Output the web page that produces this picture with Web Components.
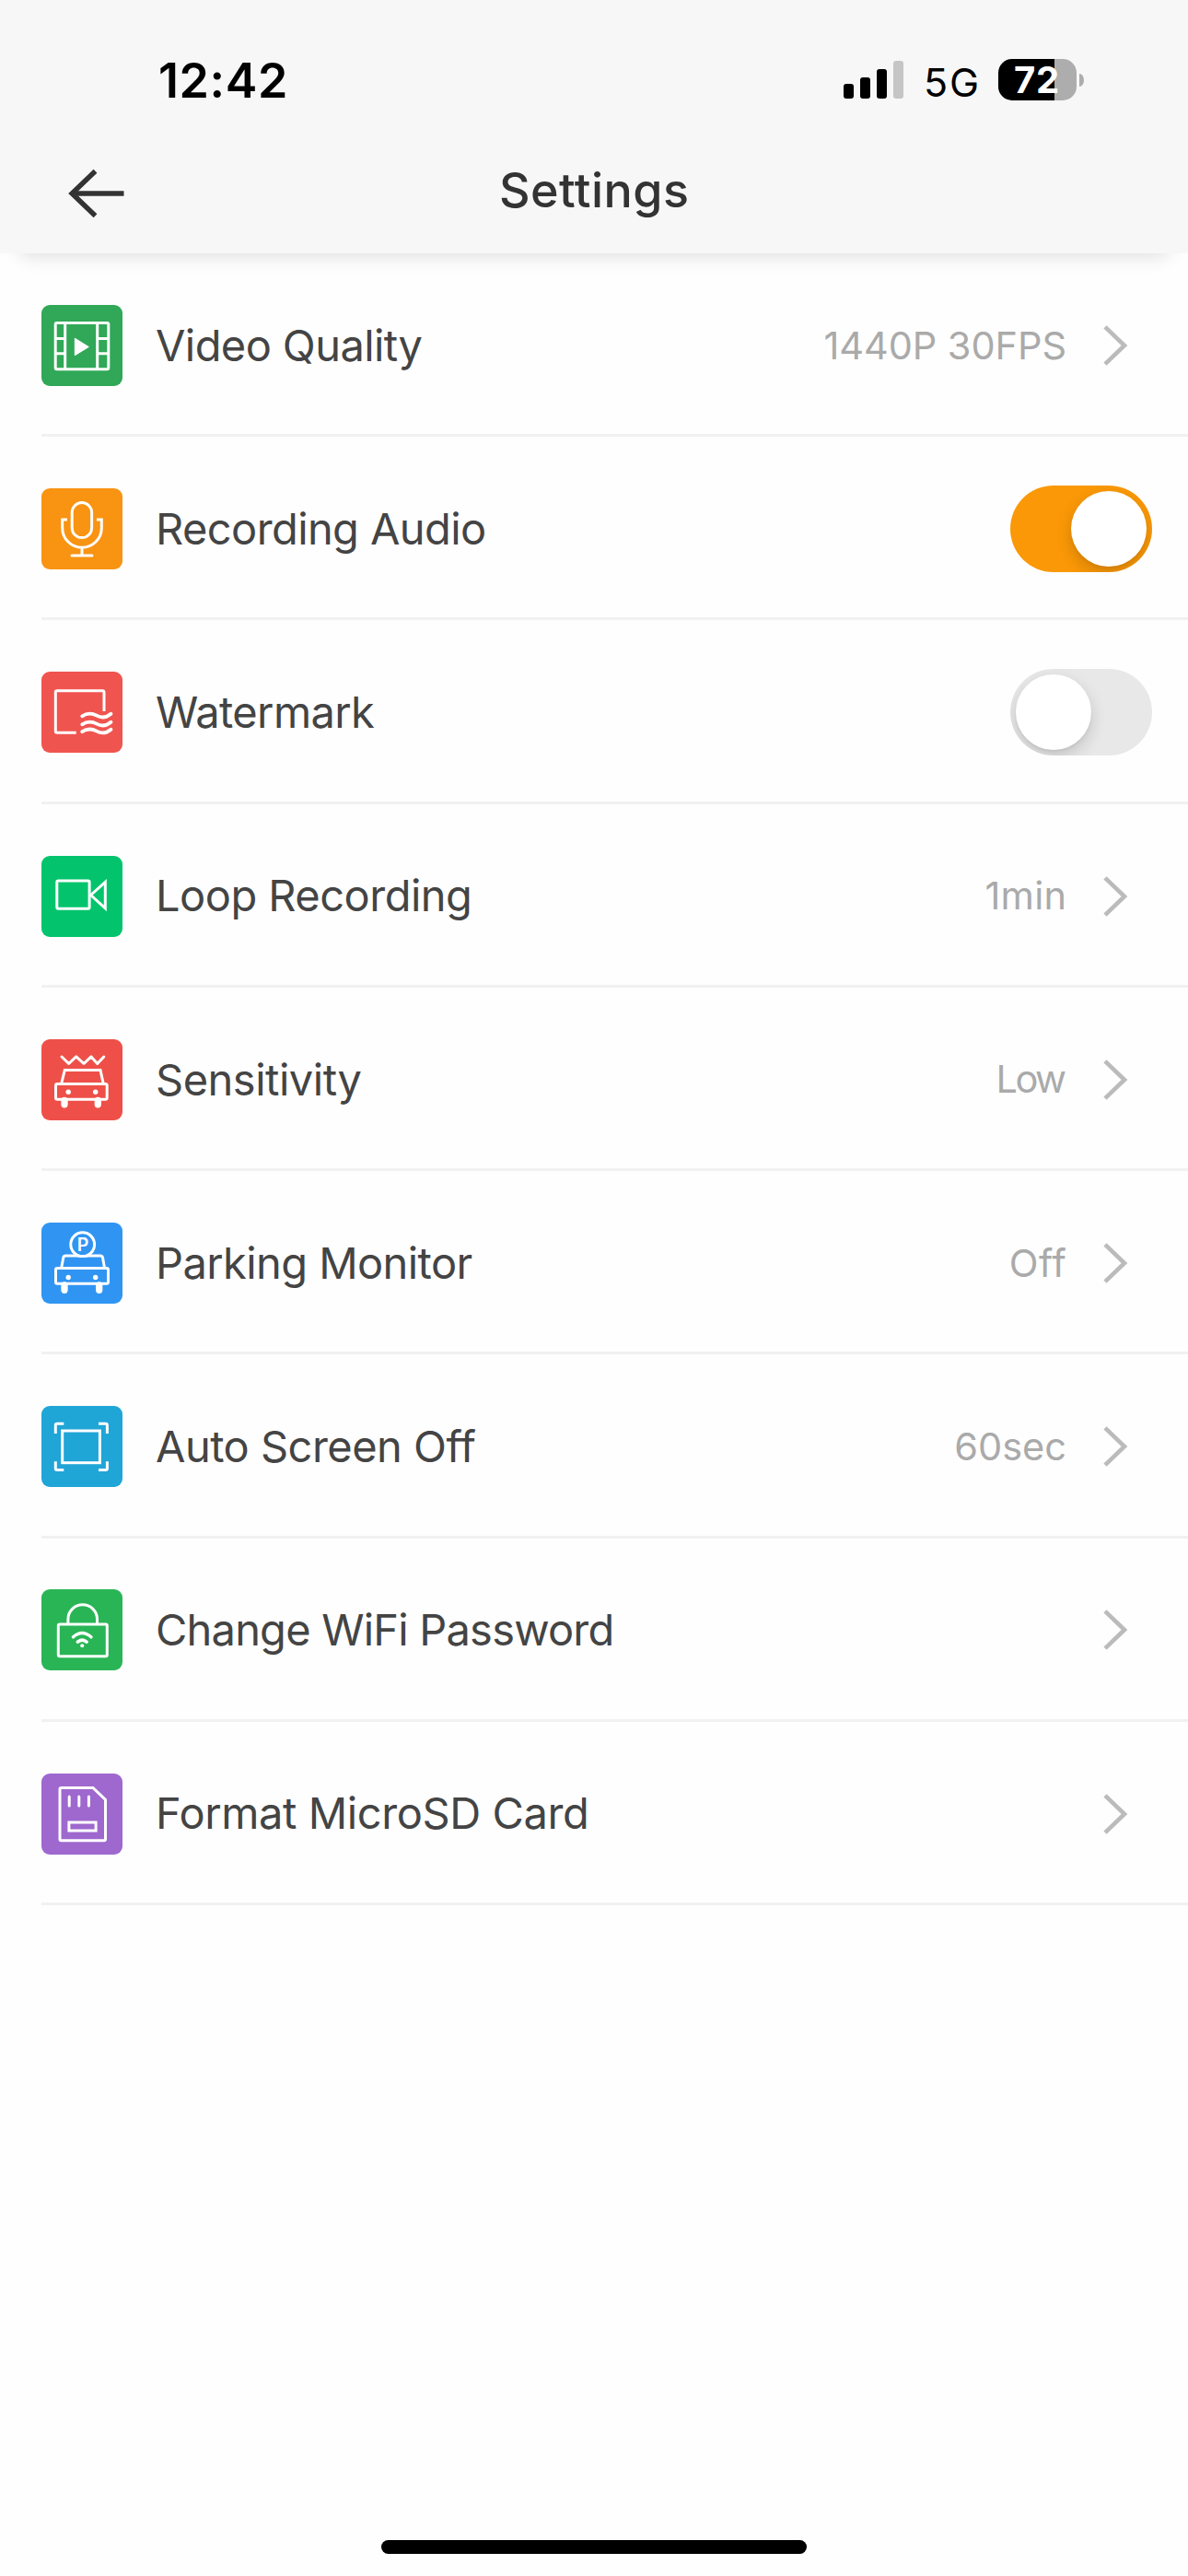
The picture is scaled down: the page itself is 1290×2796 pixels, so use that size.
<!DOCTYPE html>
<html lang="en">
<head>
<meta charset="utf-8">
<title>Settings</title>
<style>
html,body{margin:0;padding:0}
body{width:1290px;height:2796px;overflow:hidden;background:#fefefe;font-family:Inter,"Liberation Sans",sans-serif}
</style>
</head>
<body>
<settings-screen></settings-screen>
<script>
const define = (name, html, setup) => {
  const tpl = document.createElement('template');
  tpl.innerHTML = html;
  customElements.define(name, class extends HTMLElement {
    connectedCallback() {
      if (this.shadowRoot) return;
      this.attachShadow({ mode: 'open' }).append(tpl.content.cloneNode(true));
      if (setup) setup.call(this, this.shadowRoot);
    }
  });
};

// One line of text, tracked so that its ink spans the given number of pixels.
const ctx = document.createElement('canvas').getContext('2d');
define('track-text', `<style>:host{display:block;white-space:nowrap;line-height:1.2}</style><span></span>`, function (root) {
  const text = this.getAttribute('text');
  const size = this.getAttribute('size');
  const weight = this.getAttribute('weight') || 400;
  const span = root.querySelector('span');
  span.textContent = text;
  this.style.fontSize = size + 'px';
  this.style.fontWeight = weight;
  ctx.font = `${weight} ${size}px Inter, "Liberation Sans", sans-serif`;
  const m = ctx.measureText(text);
  const ink = m.actualBoundingBoxRight + m.actualBoundingBoxLeft;
  const spacing = (Number(this.getAttribute('ink')) - ink) / (text.length - 1);
  span.style.letterSpacing = spacing.toFixed(3) + 'px';
  span.style.marginRight = (-spacing).toFixed(3) + 'px';
});

define('battery-level', `
<style>
:host{display:flex;align-items:center;gap:3px}
.cell{width:85px;height:45px;border-radius:15px;background:linear-gradient(90deg,#000 61px,#adadad 61px);color:#fff;display:flex;align-items:center;box-sizing:border-box;padding:1px 0 0 17px}
.tip{width:5px;height:14px;border-radius:0 5px 5px 0/0 7px 7px 0;background:#adadad}
</style>
<div class="cell"><track-text text="72" size="40" weight="700" ink="46"></track-text></div><div class="tip"></div>`);

define('status-bar', `
<style>
:host{display:flex;align-items:center;justify-content:space-between;height:173px;box-sizing:border-box;padding:0 113px 0 172px;color:#000}
.time{padding-top:4px}
.right{display:flex;align-items:center}
.signal{display:flex;align-items:flex-end;gap:7px;height:41px}
.signal i{width:11px;border-radius:3px;background:#000}
.net{padding:6px 21px 0 22px}
</style>
<track-text class="time" text="12:42" size="52" weight="600" ink="136"></track-text>
<div class="right">
  <div class="signal"><i style="height:16px"></i><i style="height:23px"></i><i style="height:32px"></i><i style="height:41px;background:#c5c5c5"></i></div>
  <track-text class="net" text="5G" size="43" ink="55"></track-text>
  <battery-level></battery-level>
</div>`);

define('nav-bar', `
<style>
:host{display:grid;grid-template-columns:1fr auto 1fr;align-items:center;height:102px;box-sizing:border-box;padding:0 72px 30px;color:#333}
svg{display:block;margin-top:2px}
.title{padding-bottom:3px}
</style>
<svg width="66" height="56" viewBox="0 0 66 56" fill="none" stroke="#333" stroke-width="5.500"><path d="M62.500 28H7"/><path d="M31.500 3.800L6.200 28L31.500 52.200"/></svg>
<track-text class="title" text="Settings" size="52" weight="500" ink="202"></track-text><span></span>`);

define('toggle-switch', `
<style>
:host{display:flex;align-items:center;width:154px;height:94px;box-sizing:border-box;border-radius:47px;padding:0 6px;background:#e8e8e8;overflow:hidden}
:host([on]){background:#fa9807;justify-content:flex-end}
i{width:82px;height:82px;border-radius:50%;background:#fff;box-shadow:0 7px 17px rgba(0,0,0,.16),0 2px 3px rgba(0,0,0,.05)}
</style><i></i>`);

const CAR_EYES = y => `<circle cx="29.200" cy="${y}" r="2.700" fill="#fff" stroke="none"/><circle cx="58.700" cy="${y}" r="2.700" fill="#fff" stroke="none"/>`;
const ICONS = {
  video: ['#30a857', `<rect x="15.200" y="19.500" width="57.600" height="50.300" rx="1.500"/><path d="M25.700 19.500V70M60.700 19.500V70M15 36.500H25.700M60.700 36.500H73M15 52.700H25.700M60.700 52.700H73"/><path d="M36.300 36.200L51.300 45.500L36.300 54.700Z" fill="#fff" stroke-width="1"/>`],
  mic: ['#f99312', `<rect x="33.200" y="15.600" width="21.400" height="38" rx="10.700"/><path d="M28 34H22.700V43A21.300 21.300 0 0 0 65.300 43V34H60M44 64.300V73"/><path d="M33 73H55" stroke-linecap="round"/>`],
  watermark: ['#f0544f', `<path d="M37.700 66.300H17Q15.300 66.300 15.300 64.600V22.400Q15.300 20.700 17 20.700H66.300Q68 20.700 68 22.400V43"/><g stroke-width="3.800" stroke-linecap="round"><path d="M44.200 48.300C50 44.500 54.500 44.700 60 47.700S70.500 50 75.500 45.800"/><path d="M44.200 57.300C50 53.500 54.500 53.700 60 56.700S70.500 59 75.500 54.800"/><path d="M44.200 65.200C50 61.400 54.500 61.600 60 64.600S70.500 66.900 75.500 62.700"/></g>`],
  camera: ['#03c46c', `<rect x="16.800" y="27" width="35.300" height="30.200" rx="1.500"/><path d="M53.600 42.500L69.300 28.300V56.800Z"/>`],
  sensitivity: ['#ee5049', `<path d="M22 19L29.700 26.500L37.700 18.900L46 26.500L54 18.900L60.700 26.500L67.800 19" stroke-linecap="round" stroke-linejoin="round"/><path d="M21.700 48L25.300 33.600H64L67.200 48"/><rect x="15.500" y="48.500" width="55.700" height="16.700" rx="1.800"/>${CAR_EYES(57.3)}<path d="M25 66.500V70.800M61.300 66.500V70.800" stroke-width="7.300" stroke-linecap="round"/>`],
  parking: ['#3095f2', `<path d="M21.700 49L23.800 38Q24.200 36 26.300 36H64Q66 36 66.500 38L68.500 49"/><circle cx="44.700" cy="23.700" r="12.900" fill="#3095f2"/><rect x="15.500" y="49.500" width="57" height="16.700" rx="1.800"/>${CAR_EYES(59.5)}<path d="M25 68V73.300M62.700 68V73.300" stroke-width="7.300" stroke-linecap="round"/><text x="38.700" y="30.600" font-size="19.500" font-weight="600" fill="#fff" stroke="none">P</text>`],
  screen: ['#20a5d7', `<rect x="22.700" y="27" width="40.700" height="34.700"/><path d="M24.300 19.300H17Q15.300 19.300 15.300 21V30M62 19.300H69.700Q71.400 19.300 71.400 21V30M24.300 69.400H17Q15.300 69.400 15.300 67.700V60.300M62 69.400H69.700Q71.400 69.400 71.400 67.700V60.300"/>`],
  lock: ['#29b556', `<path d="M28.900 37.500V32.500A15.800 15.800 0 0 1 60.500 32.500V37.500"/><rect x="18.300" y="38" width="53" height="34.800" rx="1.500"/><g stroke-linecap="round" stroke-width="3.500"><path d="M34.500 51.800Q44.200 43.300 53.900 51.800"/><path d="M39.300 57.200Q44.200 53 49.100 57.200"/></g><circle cx="44.200" cy="61.300" r="2" fill="#fff" stroke="none"/>`],
  card: ['#9e68ce', `<path d="M21.500 15.500H56L69.500 28.300V71.300Q69.500 72.800 68 72.800H21.500Q20 72.800 20 71.300V17Q20 15.500 21.500 15.500Z"/><path d="M30.200 25V35M40.800 25V35M51.400 25V35" stroke-linecap="round"/><rect x="29.900" y="53" width="29.200" height="9"/>`]
};
define('setting-icon', `
<style>
:host{display:block;width:88px;height:88px;border-radius:9px;flex:none}
svg{display:block;font-family:Inter,sans-serif}
</style><div></div>`, function (root) {
  const [color, art] = ICONS[this.getAttribute('name')];
  this.style.background = color;
  root.querySelector('div').innerHTML = `<svg width="88" height="88" viewBox="0 0 88 88" fill="none" stroke="#fff" stroke-width="3">${art}</svg>`;
});

define('setting-row', `
<style>
:host{display:flex;align-items:center;height:199.220px;box-sizing:border-box;margin-left:45px;padding-top:3.600px;border-bottom:3px solid #f1f1f1}
.lead{display:flex;flex:1;align-items:center;gap:36px}
.label{color:#444}
.value{color:#aaa;padding-top:1px}
.end{display:flex;align-items:center}
svg{display:block;margin:0 63.500px 0 38.500px}
::slotted(toggle-switch){margin-right:39px}
</style>
<div class="lead"></div><div class="end"><slot></slot></div>`, function (root) {
  const attr = n => this.getAttribute(n);
  root.querySelector('.lead').innerHTML = `<setting-icon name="${attr('icon')}"></setting-icon><track-text class="label" text="${attr('label')}" size="47" ink="${attr('ink')}"></track-text>`;
  if (!this.children.length) {
    const value = attr('value') ? `<track-text class="value" text="${attr('value')}" size="41.500" ink="${attr('value-ink')}"></track-text>` : '';
    root.querySelector('.end').innerHTML = value + `<svg width="30" height="46" viewBox="0 0 30 46" fill="none" stroke="#bbb" stroke-width="4.600"><path d="M3 2.800L24 23L3 43.200"/></svg>`;
  }
});

define('settings-screen', `
<style>
:host{display:flex;flex-direction:column;width:1290px;height:2796px;background:#fefefe}
header{height:275px;background:#f7f7f7;position:relative;box-shadow:0 24px 20px -22px rgba(0,0,0,.14)}
main{flex:1}
.home{width:462px;height:15px;border-radius:8px;background:#000;align-self:center;margin-bottom:24px}
</style>
<header><status-bar></status-bar><nav-bar></nav-bar></header>
<main>
  <setting-row icon="video" label="Video Quality" ink="288.500" value="1440P 30FPS" value-ink="261"></setting-row>
  <setting-row icon="mic" label="Recording Audio" ink="353"><toggle-switch on></toggle-switch></setting-row>
  <setting-row icon="watermark" label="Watermark" ink="237"><toggle-switch></toggle-switch></setting-row>
  <setting-row icon="camera" label="Loop Recording" ink="337" value="1min" value-ink="85"></setting-row>
  <setting-row icon="sensitivity" label="Sensitivity" ink="221.500" value="Low" value-ink="72.500"></setting-row>
  <setting-row icon="parking" label="Parking Monitor" ink="339.500" value="Off" value-ink="60"></setting-row>
  <setting-row icon="screen" label="Auto Screen Off" ink="346.500" value="60sec" value-ink="118"></setting-row>
  <setting-row icon="lock" label="Change WiFi Password" ink="493.500"></setting-row>
  <setting-row icon="card" label="Format MicroSD Card" ink="464"></setting-row>
</main>
<div class="home"></div>`);
</script>
</body>
</html>
